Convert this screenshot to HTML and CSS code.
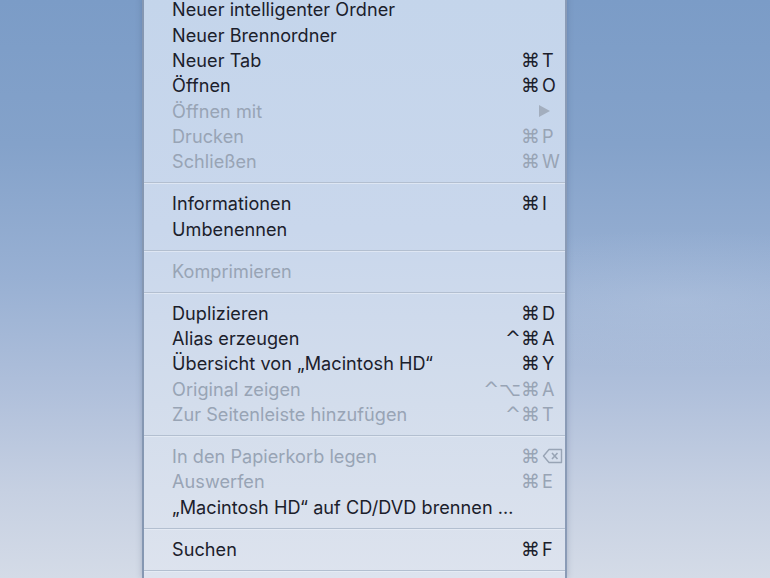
FILE: index.html
```html
<!DOCTYPE html>
<html lang="de">
  <head>
    <meta charset="UTF-8" />
    <meta name="viewport" content="width=device-width, initial-scale=1.0" />
    <title>Ablage</title>
    <link rel="stylesheet" href="styles.css">
  </head>
  <body>
    <div class="desktop">
      <div class="menu">
        <div class="item"><span class="label">Neuer intelligenter Ordner</span></div>
        <div class="item"><span class="label">Neuer Brennordner</span></div>
        <div class="item"><span class="label">Neuer Tab</span><span class="mods">⌘</span><span class="key">T</span></div>
        <div class="item"><span class="label">Öffnen</span><span class="mods">⌘</span><span class="key">O</span></div>
        <div class="item disabled"><span class="label">Öffnen mit</span><span class="mods"></span><span class="key"><span class="arrow"></span></span></div>
        <div class="item disabled"><span class="label">Drucken</span><span class="mods">⌘</span><span class="key">P</span></div>
        <div class="item disabled"><span class="label">Schließen</span><span class="mods">⌘</span><span class="key">W</span></div>

        <div class="sep"></div>

        <div class="item"><span class="label">Informationen</span><span class="mods">⌘</span><span class="key">I</span></div>
        <div class="item"><span class="label">Umbenennen</span></div>

        <div class="sep"></div>

        <div class="item disabled"><span class="label">Komprimieren</span></div>

        <div class="sep"></div>

        <div class="item"><span class="label">Duplizieren</span><span class="mods">⌘</span><span class="key">D</span></div>
        <div class="item"><span class="label">Alias erzeugen</span><span class="mods">^⌘</span><span class="key">A</span></div>
        <div class="item"><span class="label">Übersicht von „Macintosh HD“</span><span class="mods">⌘</span><span class="key">Y</span></div>
        <div class="item disabled"><span class="label">Original zeigen</span><span class="mods">^⌥⌘</span><span class="key">A</span></div>
        <div class="item disabled"><span class="label">Zur Seitenleiste hinzufügen</span><span class="mods">^⌘</span><span class="key">T</span></div>

        <div class="sep"></div>

        <div class="item disabled"><span class="label">In den Papierkorb legen</span><span class="mods">⌘</span><span class="key">
          <svg class="del" viewBox="0 0 21 16" width="21" height="16"><path d="M7 1.5 H19.5 V14.5 H7 L1.5 8 Z" fill="none" stroke="currentColor" stroke-width="1.4" stroke-linejoin="round"/><path d="M10 5 L15.5 11 M15.5 5 L10 11" stroke="currentColor" stroke-width="1.6"/></svg>
        </span></div>
        <div class="item disabled"><span class="label">Auswerfen</span><span class="mods">⌘</span><span class="key">E</span></div>
        <div class="item"><span class="label">„Macintosh HD“ auf CD/DVD brennen …</span></div>

        <div class="sep"></div>

        <div class="item"><span class="label">Suchen</span><span class="mods">⌘</span><span class="key">F</span></div>

        <div class="sep"></div>

        <div class="item"><span class="label">&nbsp;</span></div>
      </div>
    </div>
  </body>
</html>
```

FILE: styles.css
```css
html,
body {
  margin: 0;
  padding: 0;
  height: 100%;
  overflow: hidden;
}

body {
  font-family: Inter, "Noto Sans", sans-serif;
  background:
    radial-gradient(ellipse 300px 70px at 680px 300px, rgba(200, 212, 232, 0.25), transparent),
    linear-gradient(180deg, #7b9cc7 0%, #84a2ca 25%, #98b0d3 48%, #b0c0db 68%, #c6d0e2 85%, #d4dbe7 100%);
}

.desktop {
  height: 100%;
  display: flex;
  justify-content: flex-start;
  padding-left: 142px;
}

.menu {
  width: 421px;
  margin-top: -3.2px;
  background: linear-gradient(180deg, #c4d5eb 0%, #c9d7ec 40%, #d3ddec 70%, #dde3ee 100%);
  border-left: 2px solid #8597b2;
  border-right: 2px solid #8a9bb6;
  box-shadow: 0 0 6px rgba(40, 60, 90, 0.25);
  color: #1b202b;
}

.item {
  display: grid;
  grid-template-columns: 1fr auto 19px;
  align-items: center;
  height: 25.33px;
  padding: 0 5px 0 28px;
  font-size: 18.1px;
  letter-spacing: 0.05px;
}

.item.disabled {
  color: #98a4b5;
}

.label {
  white-space: nowrap;
}

.mods {
  font-family: "DejaVu Sans", sans-serif;
  font-size: 19px;
  text-align: right;
  letter-spacing: 0;
  padding-right: 1px;
}

.key {
  display: flex;
  align-items: center;
  padding-left: 1px;
}

.arrow {
  width: 0;
  height: 0;
  margin-left: -3px;
  border-top: 6px solid transparent;
  border-bottom: 6px solid transparent;
  border-left: 11px solid #a3aebe;
}

.del {
  flex-shrink: 0;
}

.sep {
  height: 16.67px;
  display: flex;
  align-items: center;
}

.sep::before {
  content: "";
  flex: 1;
  height: 1px;
  background: #b3bfd0;
  box-shadow: 0 1px 0 rgba(235, 240, 248, 0.6);
  margin-top: 1px;
}
```
